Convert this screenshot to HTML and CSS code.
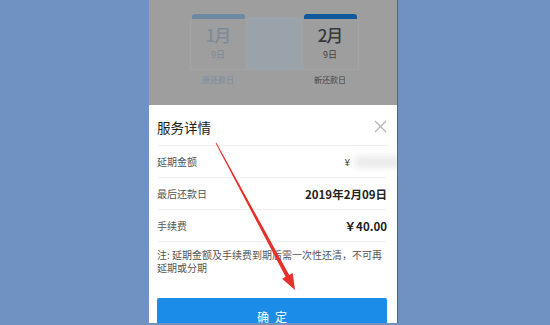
FILE: index.html
```html
<!DOCTYPE html>
<html lang="zh">
<head>
<meta charset="utf-8">
<link rel="stylesheet" href="styles.css">
</head>
<body>
<div class="phone">
  <div class="top">
    <div class="dates">
      <div class="card old">
        <div class="bar"></div>
        <div class="cbody"><div class="mon">1月</div><div class="day">9日</div></div>
      </div>
      <div class="mid"></div>
      <div class="card new">
        <div class="bar"></div>
        <div class="cbody"><div class="mon">2月</div><div class="day">9日</div></div>
      </div>
      <div class="lbl old">原还款日</div>
      <div></div>
      <div class="lbl new">新还款日</div>
    </div>
  </div>
  <div class="modal">
    <div class="head"><span class="title">服务详情</span><span class="close"><svg width="13" height="13" viewBox="0 0 13 13"><path d="M1 1L12 12M12 1L1 12" stroke="#b3b3b3" stroke-width="1.2" fill="none"/></svg></span></div>
    <div class="row"><span class="k">延期金额</span><span class="v amt">¥<span class="blur"></span></span></div>
    <div class="row"><span class="k">最后还款日</span><span class="v">2019年2月09日</span></div>
    <div class="row"><span class="k">手续费</span><span class="v">￥40.00</span></div>
    <div class="note">注: 延期金额及手续费到期后需一次性还清，不可再延期或分期</div>
    <div class="btn">确定</div>
  </div>
</div>
<svg class="arrow" width="550" height="325" viewBox="0 0 550 325"><polygon points="215.6,143.2 285.6,276.8 282.1,278.7 295,290 292.7,273.1 289.2,275 216.4,142.8" fill="#e6302c"/></svg>
</body>
</html>
```
FILE: styles.css
```css
html, body { margin: 0; padding: 0; }
body {
  background: #7092c2;
  width: 550px;
  height: 325px;
  overflow: hidden;
  position: relative;
  font-family: "Noto Sans CJK SC", "Noto Sans", sans-serif;
}
.phone {
  margin-left: 149px;
  width: 248px;
  height: 323px;
  border-right: 1px solid #56657c;
  display: flex;
  flex-direction: column;
  overflow: hidden;
}
.top {
  height: 105px;
  flex: none;
  background: #9e9e9e;
  padding-top: 14px;
  box-sizing: border-box;
}
.dates {
  display: grid;
  grid-template-columns: 57px 55px 57px;
  justify-content: center;
  margin-left: 2px;
}
.card { display: flex; flex-direction: column; }
.bar { height: 5px; border-radius: 3px 3px 0 0; margin: 0 2px; }
.old .bar { background: #6e8aa2; }
.new .bar { background: #11599a; }
.cbody {
  height: 51px;
  border: 1px solid #a4a4a4;
  border-top: none;
  box-sizing: border-box;
  display: flex;
  flex-direction: column;
  align-items: center;
  padding-top: 5px;
}
.mon { font-size: 17px; line-height: 21px; letter-spacing: -1px; font-weight: 500; }
.day { font-size: 9px; line-height: 14px; margin-top: 3px; }
.old .mon, .old .day { color: #7d8a98; }
.new .mon { color: #383838; }
.new .day { color: #424242; }
.mid {
  align-self: end;
  height: 53px;
  background: #9aa2aa;
}
.lbl { font-size: 8px; text-align: center; line-height: 12px; margin-top: 4px; }
.lbl.old { color: #7b8ca2; }
.lbl.new { color: #444; }
.modal {
  flex: 1;
  background: #fff;
  padding: 0 10px 0 8px;
}
.head {
  border-bottom: 1px solid #efefef;
  display: flex;
  align-items: center;
  justify-content: space-between;
  padding-top: 3px;
  height: 37px;
}
.title { font-size: 13.5px; color: #222; }
.close { display: flex; }
.row {
  height: 31px;
  border-bottom: 1px solid #efefef;
  display: flex;
  align-items: center;
  justify-content: space-between;
}
.k { font-size: 10px; color: #555; }
.v { font-size: 11.5px; font-weight: bold; color: #222; }
.amt { font-weight: normal; font-size: 10px; color: #444; display: flex; align-items: center; margin-right: -12px; }
.blur {
  display: inline-block;
  width: 44px;
  height: 12px;
  margin-left: 5px;
  background: #ebebeb;
  filter: blur(3px);
}
.note {
  font-size: 10px;
  line-height: 13px;
  color: #555;
  padding-top: 6px;
  height: 50px;
}
.btn {
  height: 34px;
  background: #1b8ce8;
  border-radius: 2px;
  color: #fff;
  font-size: 12px;
  letter-spacing: 6px;
  text-indent: 6px;
  display: flex;
  align-items: center;
  justify-content: center;
  padding-top: 2px;
  box-sizing: border-box;
}
.arrow { position: absolute; left: 0; top: 0; pointer-events: none; }
```
